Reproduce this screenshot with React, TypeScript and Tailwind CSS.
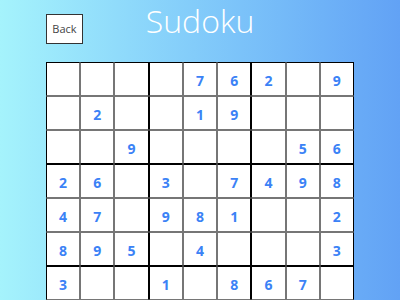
import React from "react";

const board: (number | null)[][] = [
  [null, null, null, null, 7, 6, 2, null, 9],
  [null, 2, null, null, 1, 9, null, null, null],
  [null, null, 9, null, null, null, null, 5, 6],
  [2, 6, null, 3, null, 7, 4, 9, 8],
  [4, 7, null, 9, 8, 1, null, null, 2],
  [8, 9, 5, null, 4, null, null, null, 3],
  [3, null, null, 1, null, 8, 6, 7, null],
  [null, null, null, null, null, null, null, null, null],
  [null, null, null, null, null, null, null, null, null],
];

function Cell({ r, c, v }: { r: number; c: number; v: number | null }) {
  const l = c % 3 === 0 ? "border-l-black" : "border-l-[#767676]";
  const rr = c % 3 === 2 ? "border-r-black" : "border-r-[#767676]";
  const t = r % 3 === 0 ? "border-t-black" : "border-t-[#767676]";
  const b = r % 3 === 2 ? "border-b-black" : "border-b-[#767676]";
  return (
    <div
      className={`h-[34px] border bg-white ${l} ${rr} ${t} ${b} flex items-center justify-center pt-[3px] text-[14px] font-bold text-[#3b82f6]`}
    >
      {v ?? ""}
    </div>
  );
}

export default function App() {
  return (
    <div className="h-screen overflow-hidden bg-linear-to-r from-[#a5f3fc] to-[#62a2f5] font-['Open_Sans',sans-serif]">
      <div className="mx-auto w-[308px]">
        <div className="grid h-[62px] grid-cols-[1fr_auto_1fr] items-start">
          <button className="mt-[14px] h-[30px] w-[37px] justify-self-start border border-[#333] bg-white text-[11px] text-[#444]">
            Back
          </button>
          <h1 className="text-[32px] font-light leading-[42px] text-white">Sudoku</h1>
          <div />
        </div>
        <div className="grid grid-cols-9">
          {board.map((row, r) =>
            row.map((v, c) => <Cell key={`${r}-${c}`} r={r} c={c} v={v} />)
          )}
        </div>
      </div>
    </div>
  );
}
